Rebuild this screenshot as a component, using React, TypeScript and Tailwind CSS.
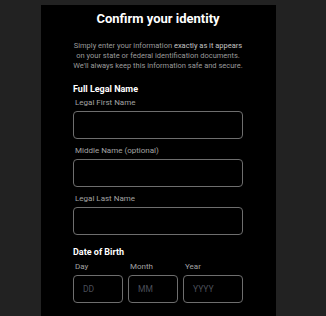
import React from "react";

const font = { fontFamily: "Roboto, 'Liberation Sans', sans-serif" };

function Field({ label, className = "" }: { label: string; className?: string }) {
  return (
    <div className={className}>
      <div className="pl-[2px] text-[8px] leading-[10px] text-[#a3a3a3]">{label}</div>
      <div className="mt-[3px] h-[28px] rounded-[4px] border border-[#6e6e6e] bg-black" />
    </div>
  );
}

function DobBox({ label, placeholder, className = "" }: { label: string; placeholder: string; className?: string }) {
  return (
    <div className={className}>
      <div className="pl-[2px] text-[8px] leading-[10px] text-[#a3a3a3]">{label}</div>
      <div className="mt-[3px] flex h-[28px] items-center rounded-[4px] border border-[#6e6e6e] bg-black pl-[9px] text-[8.5px] text-[#4a4e58]">
        {placeholder}
      </div>
    </div>
  );
}

export default function App() {
  return (
    <div className="min-h-[316px] bg-[#222222] pt-[5px]" style={font}>
      <div className="ml-[41px] w-[235px] bg-black pb-[40px] pl-[32px] pr-[33px] pt-[4px]">
        <h1 className="whitespace-nowrap text-center text-[13px] font-bold leading-[20px] text-white">Confirm your identity</h1>
        <p className="mt-[12px] whitespace-nowrap text-center text-[7.5px] leading-[10px] text-[#9a9a9a]">
          Simply enter your information <span className="text-[#c4c4c4]">exactly as it appears</span>
          <br />
          on your state or federal identification documents.
          <br />
          We'll always keep this information safe and secure.
        </p>
        <div className="mt-[12px] text-[9px] font-bold leading-[12px] text-white">Full Legal Name</div>
        <Field label="Legal First Name" className="mt-[3px]" />
        <Field label="Middle Name (optional)" className="mt-[7px]" />
        <Field label="Legal Last Name" className="mt-[7px]" />
        <div className="mt-[11px] text-[9px] font-bold leading-[12px] text-white">Date of Birth</div>
        <div className="mt-[4px] flex gap-[5px]">
          <DobBox label="Day" placeholder="DD" className="w-[50px]" />
          <DobBox label="Month" placeholder="MM" className="w-[50px]" />
          <DobBox label="Year" placeholder="YYYY" className="flex-1" />
        </div>
      </div>
    </div>
  );
}
